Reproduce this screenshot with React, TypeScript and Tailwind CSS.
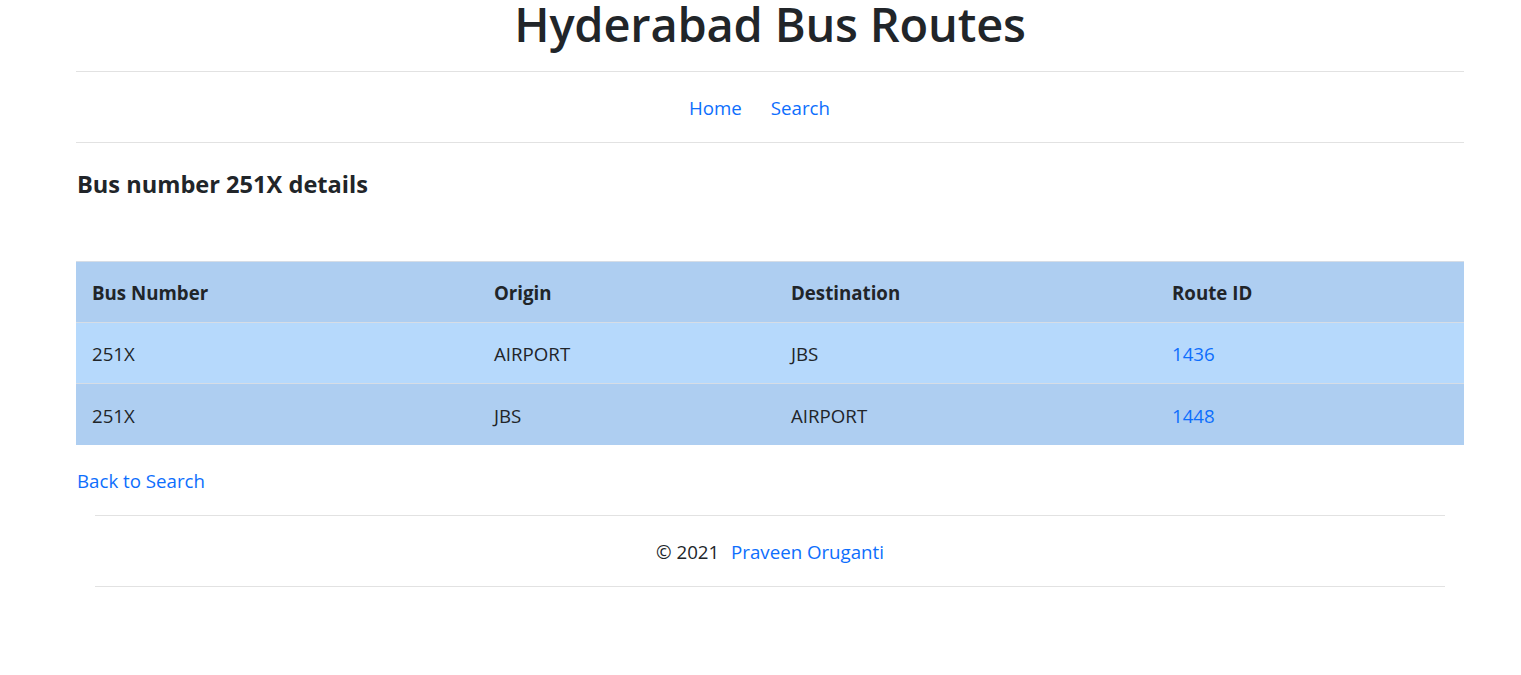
import React from "react";

const rows = [
  { bus: "251X", origin: "AIRPORT", dest: "JBS", route: "1436", bg: "bg-[#b6d9fc]" },
  { bus: "251X", origin: "JBS", dest: "AIRPORT", route: "1448", bg: "bg-[#aecef1]" },
];

export default function App() {
  return (
    <div className="min-h-[675px] bg-white text-[#212529] font-['Open_Sans',sans-serif] text-[18.7px]">
      <div className="ml-[76px] w-[1388px]">
        <header className="border-b border-[#e2e2e2] h-[72px] flex justify-center">
          <h1 className="text-[47px] leading-[48px] font-semibold tracking-[-0.2px]">Hyderabad Bus Routes</h1>
        </header>
        <nav className="border-b border-[#e2e2e2] h-[71px] flex items-center justify-center gap-[29px] pt-[3px] pr-[21px]">
          <a href="#" className="text-[#0d6efd]">Home</a>
          <a href="#" className="text-[#0d6efd]">Search</a>
        </nav>
        <h4 className="mt-[26px] text-[23.6px] leading-[30px] font-bold pl-[1px]">Bus number 251X details</h4>
        <table className="mt-[62px] w-full border-collapse border-t border-[#d6dde6]">
          <thead>
            <tr className="bg-[#aecef1] h-[61px] border-b border-[#d6dde6]">
              <th className="text-left font-bold px-[16px] pt-[2px] w-[402px]">Bus Number</th>
              <th className="text-left font-bold px-[16px] pt-[2px] w-[297px]">Origin</th>
              <th className="text-left font-bold px-[16px] pt-[2px] w-[381px]">Destination</th>
              <th className="text-left font-bold px-[16px] pt-[2px]">Route ID</th>
            </tr>
          </thead>
          <tbody>
            {rows.map((r, i) => (
              <tr key={i} className={`${r.bg} h-[61px] ${i === 0 ? "border-b border-[#d6dde6]" : ""}`}>
                <td className="px-[16px] pt-[3px]">{r.bus}</td>
                <td className="px-[16px] pt-[3px]">{r.origin}</td>
                <td className="px-[16px] pt-[3px]">{r.dest}</td>
                <td className="px-[16px] pt-[3px]">
                  <a href="#" className="text-[#0d6efd]">{r.route}</a>
                </td>
              </tr>
            ))}
          </tbody>
        </table>
        <div className="mt-[22px] pl-[1px] leading-[28px]">
          <a href="#" className="text-[#0d6efd]">Back to Search</a>
        </div>
        <footer className="mx-[19px] mt-[20px] border-y border-[#e2e2e2] h-[72px] flex items-center justify-center pt-[3px]">
          <span>© 2021&nbsp;</span>
          <a href="#" className="text-[#0d6efd] ml-[7px]">Praveen Oruganti</a>
        </footer>
      </div>
    </div>
  );
}
